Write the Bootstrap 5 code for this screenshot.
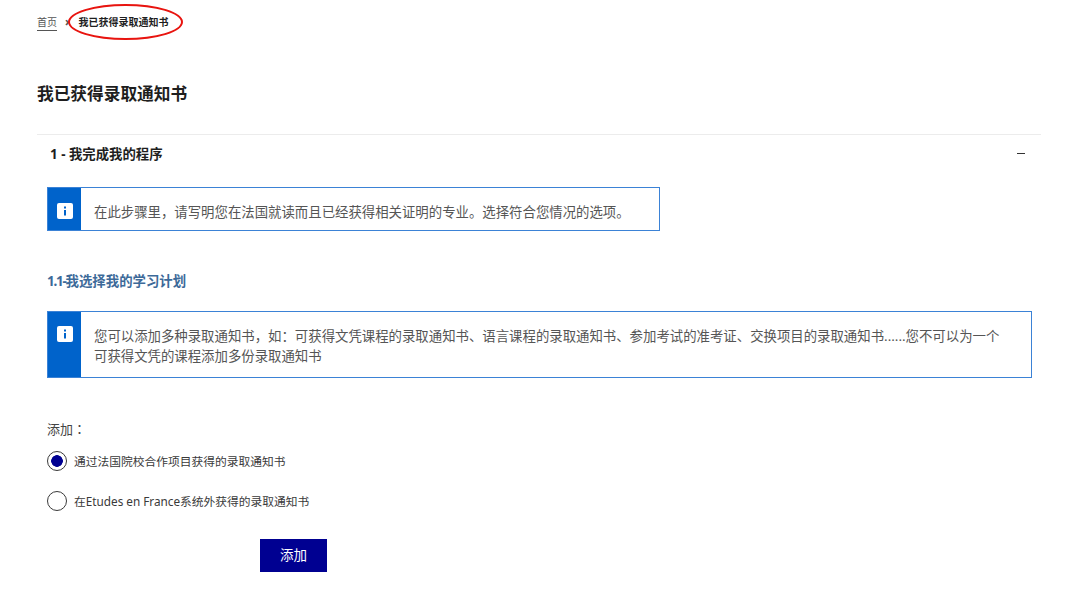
<!DOCTYPE html>
<html lang="zh-CN">
<head>
<meta charset="utf-8">
<title>我已获得录取通知书</title>
<link href="https://cdn.jsdelivr.net/npm/bootstrap@5.3.0/dist/css/bootstrap.min.css" rel="stylesheet">
<style>
html,body{height:601px;overflow:hidden;background:#fff}
body{font-family:"Noto Sans","Noto Sans CJK SC",sans-serif;color:#2a2a2a;font-size:13px;line-height:20px}
.page-wrap{padding:0 39px 0 37px;position:relative}
.crumbs{height:44px;margin:0;font-size:10px;line-height:14px;align-items:center;padding-top:0}
.crumbs .breadcrumb-item+.breadcrumb-item{padding-left:8px}
.crumbs .breadcrumb-item+.breadcrumb-item::before{content:"›";color:#555;padding-right:9px;font-size:12px;line-height:13px}
.crumbs a{color:#555;text-decoration:none;border-bottom:1px solid #555;padding-bottom:1px}
.crumbs .breadcrumb-item.active{color:#1e1e1e;font-weight:700}
.circle-mark{position:absolute;left:68px;top:4px;width:115px;height:36px;border:2px solid #e8140f;border-radius:50%}
.main-title{font-size:16.7px;line-height:24px;font-weight:700;color:#1e1e1e;margin:38px 0 28px}
.step-head{border-top:1px solid #ececec;height:53px;padding:9px 16px 0 13px}
.step-head h2{font-size:13.4px;line-height:20px;font-weight:700;margin:0;color:#1e1e1e}
.minus-bar{width:8px;height:1px;background:#333;margin-top:9px}
.note-box{margin-left:10px;border:1px solid #3b82d6;background:#fff;color:#555}
.note-short{width:613px;height:44px}
.note-long{width:985px;height:67px}
.note-side{width:33px;background:#0063cb;flex:none;padding-top:15px}
.note-long .note-side{padding-top:14px}
.note-ico{display:block;width:16px;height:16px}
.note-text{padding:14px 12px 0 13px;font-size:13.4px;line-height:20px}
.note-long .note-text{padding-top:14px;padding-right:28px}
.sub-title{font-size:13.4px;line-height:20px;font-weight:700;color:#3d6a99;margin:40px 0 20px 10px}
.tight-num{letter-spacing:-1.2px}
.form-area{padding-left:10px;margin-top:41px}
.add-label{color:#444;font-size:13px;line-height:20px;margin-bottom:12px}
.choice{display:flex;align-items:center;min-height:20px;margin:0 0 20px;padding:0;gap:7px}
.choice .form-check-input{width:20px;height:20px;margin:0;flex:none;border:1.5px solid #3a3a3a;background:#fff;background-image:none;box-shadow:none}
.choice .form-check-input:checked{background-color:#fff;border-color:#3a3a3a;background-image:radial-gradient(circle,#000091 0,#000091 5.5px,transparent 6.1px)}
.choice .form-check-label{font-size:11.75px;line-height:20px;color:#3a3a3a}
.add-btn{display:block;margin:28px 0 0 213px;width:67px;height:33px;padding:0;background:#000091;border:0;border-radius:0;color:#fff;font-size:13.5px;line-height:33px}
.add-btn:hover{background:#000091;color:#fff}
</style>
</head>
<body>
<div class="page-wrap">
  <nav aria-label="breadcrumb">
    <ol class="breadcrumb crumbs">
      <li class="breadcrumb-item"><a href="#">首页</a></li>
      <li class="breadcrumb-item active" aria-current="page">我已获得录取通知书</li>
    </ol>
  </nav>
  <div class="circle-mark"></div>
  <h1 class="main-title">我已获得录取通知书</h1>
  <div class="step-head d-flex justify-content-between align-items-start">
    <h2>1 - 我完成我的程序</h2>
    <div class="minus-bar"></div>
  </div>
  <div class="note-box note-short d-flex">
    <div class="note-side d-flex justify-content-center">
      <svg class="note-ico" viewBox="0 0 16 16"><rect width="16" height="16" rx="2" fill="#fff"/><rect x="7" y="3.5" width="2" height="2" fill="#0063cb"/><rect x="7" y="7" width="2" height="5.5" fill="#0063cb"/></svg>
    </div>
    <div class="note-text text-nowrap">在此步骤里，请写明您在法国就读而且已经获得相关证明的专业。选择符合您情况的选项。</div>
  </div>
  <h3 class="sub-title"><span class="tight-num">1.1-</span>我选择我的学习计划</h3>
  <div class="note-box note-long d-flex">
    <div class="note-side d-flex justify-content-center">
      <svg class="note-ico" viewBox="0 0 16 16"><rect width="16" height="16" rx="2" fill="#fff"/><rect x="7" y="3.5" width="2" height="2" fill="#0063cb"/><rect x="7" y="7" width="2" height="5.5" fill="#0063cb"/></svg>
    </div>
    <div class="note-text">您可以添加多种录取通知书，如：可获得文凭课程的录取通知书、语言课程的录取通知书、参加考试的准考证、交换项目的录取通知书......您不可以为一个可获得文凭的课程添加多份录取通知书</div>
  </div>
  <div class="form-area">
    <div class="add-label" lang="zh-TW">添加：</div>
    <div class="form-check choice">
      <input class="form-check-input" type="radio" name="src" id="r1" checked>
      <label class="form-check-label" for="r1">通过法国院校合作项目获得的录取通知书</label>
    </div>
    <div class="form-check choice">
      <input class="form-check-input" type="radio" name="src" id="r2">
      <label class="form-check-label" for="r2">在Etudes en France系统外获得的录取通知书</label>
    </div>
    <button type="button" class="btn add-btn">添加</button>
  </div>
</div>
<script src="https://cdn.jsdelivr.net/npm/bootstrap@5.3.0/dist/js/bootstrap.bundle.min.js"></script>
</body>
</html>
